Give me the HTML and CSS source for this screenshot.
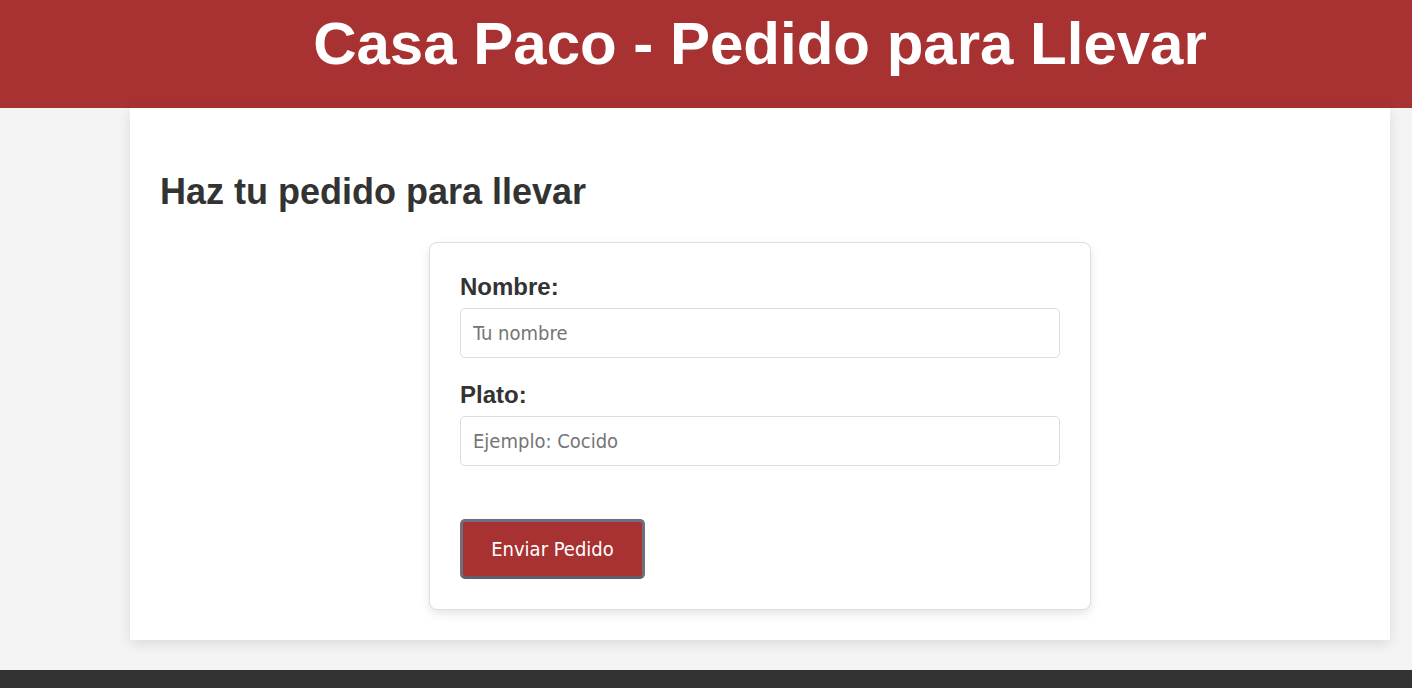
FILE: index.html
```html
<!DOCTYPE html>
<html lang="es">
<head>
    <meta charset="UTF-8">
    <meta name="viewport" content="width=device-width, initial-scale=1.0">
    <title>Casa Paco - Pedido para Llevar</title>
    <link rel="stylesheet" href="styles.css">
</head>
<body>
<header class="site-header">
    <h1>Casa Paco - Pedido para Llevar</h1>
</header>

<main class="container">
    <h2>Haz tu pedido para llevar</h2>
    <form class="order-form" onsubmit="return false;">
        <label for="nombre">Nombre:</label>
        <input type="text" id="nombre" placeholder="Tu nombre">

        <label for="plato">Plato:</label>
        <input type="text" id="plato" placeholder="Ejemplo: Cocido">

        <button type="submit">Enviar Pedido</button>
    </form>
</main>

<footer class="site-footer"></footer>
</body>
</html>
```

FILE: styles.css
```css
body {
    font-family: 'Liberation Sans', Arial, sans-serif;
    margin: 0;
    background-color: #f4f4f4;
    color: #333;
}
.site-header {
    background-color: #a83232;
    color: white;
    height: 108px;
    display: flex;
    justify-content: center;
    align-items: flex-start;
    padding-left: 108px;
}
.site-header h1 {
    margin: 0;
    padding-top: 9px;
    font-size: 60px;
    font-weight: bold;
    line-height: 1.15;
}
.container {
    background-color: white;
    margin: 0 22px 30px 130px;
    padding: 30px;
    box-shadow: 0 4px 12px rgba(0, 0, 0, 0.1);
}
.container h2 {
    margin: 34px 0 30px;
    font-size: 36px;
    line-height: 40px;
}
.order-form {
    width: 600px;
    margin: 0 auto;
    padding: 30px;
    background-color: white;
    border: 1px solid #ddd;
    border-radius: 8px;
    box-shadow: 0 4px 10px rgba(0, 0, 0, 0.1);
}
.order-form label {
    display: block;
    font-size: 24px;
    font-weight: bold;
    line-height: 28px;
    margin-bottom: 7px;
}
.order-form input {
    display: block;
    width: 100%;
    height: 50px;
    box-sizing: border-box;
    padding: 0 12px;
    margin-bottom: 23px;
    border: 1px solid #ddd;
    border-radius: 5px;
    font-family: 'DejaVu Sans Condensed', 'Liberation Sans', sans-serif;
    font-size: 20px;
    color: #333;
}
.order-form input::placeholder {
    color: #757575;
}
.order-form button {
    margin-top: 30px;
    width: 185px;
    height: 60px;
    background-color: #a83232;
    color: white;
    border: 3px solid #6e6e7e;
    border-bottom-color: #5e5e6e;
    border-radius: 5px;
    font-family: 'DejaVu Sans Condensed', 'Liberation Sans', sans-serif;
    font-size: 20px;
    cursor: pointer;
}
.order-form button:hover {
    background-color: #8f2a2a;
}
.site-footer {
    background-color: #333;
    height: 60px;
}
```
